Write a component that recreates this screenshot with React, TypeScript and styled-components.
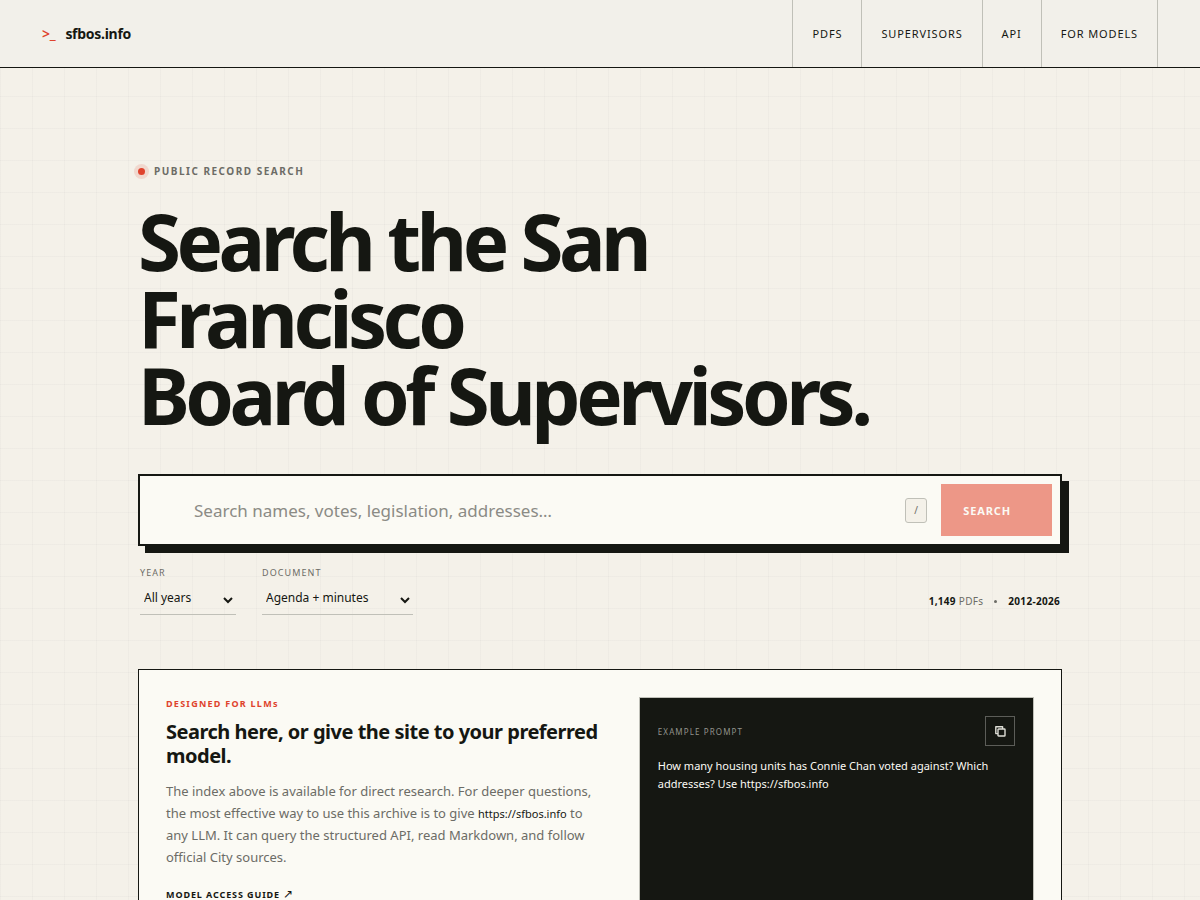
import React from "react";
import styled, { createGlobalStyle } from "styled-components";

const ink = "#151712";
const paper = "#f4f1e9";
const card = "#fbfaf4";
const muted = "#6c6c66";
const accent = "#df432d";
const rule = "#c0c0b8";

const GlobalStyle = createGlobalStyle`
  *, *::before, *::after { box-sizing: border-box; }
  body {
    margin: 0;
    color: ${ink};
    background-color: ${paper};
    background-image:
      linear-gradient(rgba(21, 23, 18, 0.025) 1px, transparent 1px),
      linear-gradient(90deg, rgba(21, 23, 18, 0.025) 1px, transparent 1px);
    background-size: 32px 32px;
    font-family: "Noto Sans", sans-serif;
    font-size: 14px;
  }
  button, input, select { font: inherit; color: inherit; }
  a { color: inherit; text-decoration: none; }
`;

const Header = styled.header`
  display: flex;
  justify-content: space-between;
  height: 68px;
  padding: 0 42px;
  background: #f2f0ea;
  border-bottom: 1px solid ${ink};
`;

const Brand = styled.a`
  display: flex;
  align-items: center;
  gap: 10px;
  font-weight: 700;
  letter-spacing: -0.02em;
`;

const Prompt = styled.span`
  color: ${accent};
  font-size: 14px;
  font-weight: 600;
`;

const Nav = styled.nav`
  display: flex;
  border-left: 1px solid ${rule};
`;

const NavLink = styled.a`
  display: flex;
  align-items: center;
  padding: 0 19px;
  border-right: 1px solid ${rule};
  font-size: 11px;
  letter-spacing: 0.08em;
  text-transform: uppercase;
`;

const Main = styled.main`
  max-width: 924px;
  margin: 0 auto;
  padding: 94px 0 72px;
`;

const Eyebrow = styled.p`
  display: flex;
  align-items: center;
  gap: 9px;
  margin: 0 0 23px;
  color: ${muted};
  font-size: 10px;
  line-height: 18px;
  font-weight: 700;
  letter-spacing: 0.15em;
  text-transform: uppercase;
`;

const Dot = styled.span`
  width: 7px;
  height: 7px;
  border-radius: 50%;
  background: ${accent};
  box-shadow: 0 0 0 4px rgba(223, 67, 45, 0.14);
`;

const Title = styled.h1`
  max-width: 800px;
  margin: 0 0 40px;
  font-size: 78px;
  line-height: 77px;
  font-weight: 700;
  letter-spacing: -0.058em;
`;

const SearchForm = styled.form`
  display: flex;
  align-items: center;
  gap: 14px;
  height: 72px;
  padding: 8px 8px 8px 54px;
  background: ${card};
  border: 2px solid ${ink};
  box-shadow: 7px 7px 0 ${ink};
`;

const SearchInput = styled.input`
  flex: 1;
  min-width: 0;
  height: 100%;
  padding: 0;
  border: 0;
  outline: 0;
  background: transparent;
  font-size: 17px;
  &::placeholder { color: #8b8b85; opacity: 1; }
`;

const Key = styled.kbd`
  display: grid;
  place-items: center;
  width: 22px;
  height: 25px;
  border: 1px solid ${rule};
  border-radius: 3px;
  background: ${paper};
  color: ${muted};
  font-family: inherit;
  font-size: 10px;
`;

const SearchButton = styled.button`
  align-self: stretch;
  padding: 0 41px 0 22px;
  border: 0;
  background: #ed9787;
  color: ${card};
  font-size: 11px;
  font-weight: 700;
  letter-spacing: 0.08em;
  text-transform: uppercase;
`;

const FilterRow = styled.div`
  display: flex;
  justify-content: space-between;
  align-items: flex-end;
  margin: 20px 2px 54px;
`;

const Filters = styled.div`
  display: flex;
  gap: 26px;
`;

const Field = styled.label`
  display: grid;
  gap: 6px;
  color: ${muted};
  font-size: 9px;
  line-height: 14px;
  letter-spacing: 0.12em;
  text-transform: uppercase;
`;

const Select = styled.select<{ $width: number }>`
  width: ${(p) => p.$width}px;
  height: 29px;
  padding: 0 0 6px;
  border: 0;
  border-bottom: 1px solid ${rule};
  border-radius: 0;
  background: transparent;
  color: ${ink};
  font-size: 12px;
`;

const Stats = styled.p`
  display: flex;
  align-items: center;
  gap: 11px;
  margin: 0 0 5px;
  color: ${muted};
  font-size: 10px;
  line-height: 18px;
  letter-spacing: 0.03em;
  strong { color: ${ink}; }
`;

const Separator = styled.span`
  width: 3px;
  height: 3px;
  border-radius: 50%;
  background: ${muted};
`;

const ModelCard = styled.section`
  display: grid;
  grid-template-columns: minmax(0, 11fr) minmax(0, 10fr);
  gap: 38px;
  padding: 27px;
  background: ${card};
  border: 1px solid ${ink};
`;

const CardLabel = styled.p`
  margin: 0 0 9px;
  color: ${accent};
  font-size: 9px;
  line-height: 14px;
  font-weight: 700;
  letter-spacing: 0.14em;
`;

const CardTitle = styled.h2`
  margin: 0 0 12px;
  font-size: 20px;
  line-height: 24px;
  font-weight: 700;
  letter-spacing: -0.025em;
`;

const CardText = styled.p`
  margin: 0 0 20px;
  color: ${muted};
  font-size: 13px;
  line-height: 22px;
  code {
    color: ${ink};
    font-family: inherit;
    font-size: 11px;
    line-height: 1;
  }
`;

const GuideLink = styled.a`
  display: block;
  width: fit-content;
  font-size: 9px;
  line-height: 14px;
  font-weight: 700;
  letter-spacing: 0.1em;
  text-transform: uppercase;
`;

const Arrow = styled.span`
  font-size: 12px;
  line-height: 1;
  font-weight: 400;
`;

const PromptPanel = styled.div`
  min-height: 230px;
  padding: 18px;
  background: ${ink};
  border: 1px solid ${rule};
  color: ${card};
`;

const PanelHead = styled.div`
  display: flex;
  justify-content: space-between;
  align-items: center;
  margin-bottom: 11px;
  color: #92938c;
  font-size: 8px;
  letter-spacing: 0.14em;
  text-transform: uppercase;
`;

const CopyButton = styled.button`
  display: grid;
  place-items: center;
  width: 30px;
  height: 30px;
  padding: 0;
  border: 1px solid #5c5d58;
  background: transparent;
  color: #deded6;
`;

const PanelText = styled.p`
  margin: 0;
  font-size: 11px;
  line-height: 18px;
`;

const CopyIcon = () => (
  <svg width="12" height="12" viewBox="0 0 12 12" fill="none" stroke="currentColor" strokeWidth="1.4" strokeLinejoin="round" aria-hidden="true">
    <rect x="4" y="4" width="7" height="7" rx="0.6" />
    <path d="M4 8.6H1.8V1.8H8.6V4" />
  </svg>
);

const links = ["PDFs", "Supervisors", "API", "For models"];

export default function App() {
  return (
    <>
      <GlobalStyle />
      <Header>
        <Brand href="#">
          <Prompt>&gt;_</Prompt>
          sfbos.info
        </Brand>
        <Nav>
          {links.map((l) => (
            <NavLink href="#" key={l}>{l}</NavLink>
          ))}
        </Nav>
      </Header>
      <Main>
        <Eyebrow><Dot />Public record search</Eyebrow>
        <Title>Search the San Francisco<br />Board of Supervisors.</Title>
        <SearchForm onSubmit={(e) => e.preventDefault()}>
          <SearchInput type="text" aria-label="Search records" placeholder="Search names, votes, legislation, addresses…" />
          <Key>/</Key>
          <SearchButton type="submit">Search</SearchButton>
        </SearchForm>
        <FilterRow>
          <Filters>
            <Field>
              Year
              <Select $width={96}><option>All years</option></Select>
            </Field>
            <Field>
              Document
              <Select $width={151}><option>Agenda + minutes</option></Select>
            </Field>
          </Filters>
          <Stats>
            <span><strong>1,149</strong> PDFs</span>
            <Separator />
            <strong>2012-2026</strong>
          </Stats>
        </FilterRow>
        <ModelCard>
          <div>
            <CardLabel>DESIGNED FOR LLMs</CardLabel>
            <CardTitle>Search here, or give the site to your preferred model.</CardTitle>
            <CardText>
              The index above is available for direct research. For deeper questions, the most
              effective way to use this archive is to give <code>https://sfbos.info</code> to any
              LLM. It can query the structured API, read Markdown, and follow official City sources.
            </CardText>
            <GuideLink href="#">Model access guide <Arrow>↗</Arrow></GuideLink>
          </div>
          <PromptPanel>
            <PanelHead>
              Example prompt
              <CopyButton type="button" aria-label="Copy prompt"><CopyIcon /></CopyButton>
            </PanelHead>
            <PanelText>
              How many housing units has Connie Chan voted against? Which addresses? Use https://sfbos.info
            </PanelText>
          </PromptPanel>
        </ModelCard>
      </Main>
    </>
  );
}
